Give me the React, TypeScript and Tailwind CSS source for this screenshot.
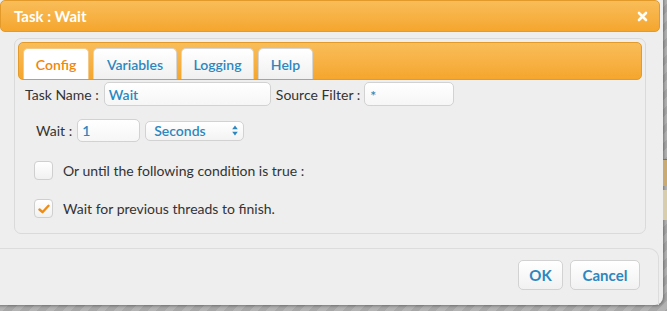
import * as React from "react";

function Checkbox({ checked }: { checked?: boolean }) {
  return (
    <span className="inline-flex h-[19px] w-[19px] items-center justify-center rounded-[4px] border border-[#cfcfcf] bg-gradient-to-b from-white to-[#f1f1f1]">
      {checked && (
        <svg width="12" height="10" viewBox="0 0 12 10">
          <path d="M1.5 5.5 L4.5 8.2 L10.5 1.8" fill="none" stroke="#f08c12" strokeWidth="2.4" strokeLinecap="round" strokeLinejoin="round" />
        </svg>
      )}
    </span>
  );
}

const tabs = [
  { label: "Config", w: "w-[66px]", active: true },
  { label: "Variables", w: "w-[84px]" },
  { label: "Logging", w: "w-[73px]" },
  { label: "Help", w: "w-[55px]" },
];

export default function App() {
  return (
    <div
      className="relative h-[311px] w-[667px] overflow-hidden bg-[#adadad] bg-[repeating-linear-gradient(135deg,#b3b3b3_0px,#b3b3b3_6px,#a6a6a6_6px,#a6a6a6_12px)] text-[14px] text-[#333]"
      style={{ fontFamily: "Lato, 'Open Sans', sans-serif" }}
    >
      {/* strip of page behind, on the right */}
      <div className="absolute right-0 top-[159px] h-[1px] w-[4px] bg-[#b0584a]" />
      <div className="absolute right-0 top-[160px] h-[26px] w-[4px] bg-[#c9aa72]" />
      <div className="absolute right-0 top-[190px] h-[30px] w-[4px] bg-[#d8ceae]" />

      <div className="-ml-[3px] -mt-[3px] flex h-[308px] w-[666px] flex-col rounded-br-[8px] bg-[#eeeeee] shadow-[1px_1px_3px_rgba(0,0,0,0.35)]">
        {/* title bar */}
        <div className="mx-[3px] mt-[3px] flex h-[32px] items-center justify-between rounded-[5px] border border-[#e29a2a] bg-gradient-to-b from-[#f9bd58] to-[#f5a62c] pl-[13px] pr-[11px]">
          <span className="text-[15px] font-bold text-white">Task : Wait</span>
          <svg width="11" height="11" viewBox="0 0 11 11">
            <path d="M2 2 L9 9 M9 2 L2 9" stroke="white" strokeWidth="2.6" strokeLinecap="round" />
          </svg>
        </div>

        {/* content panel */}
        <div className="ml-[17px] mt-[6px] h-[196px] w-[632px] rounded-[7px] border border-[#dadada] bg-[#eeeeee] p-[3px]">
          <div className="flex h-[38px] items-end gap-[4px] rounded-[5px] border border-[#e29a2a] bg-gradient-to-b from-[#f9bd58] to-[#f5a62c] pl-[4px]">
            {tabs.map((t) => (
              <div
                key={t.label}
                className={`flex h-[31px] ${t.w} items-center justify-center rounded-t-[5px] border border-b-0 text-[14px] font-semibold ${
                  t.active
                    ? "border-[#f3c98a] bg-white text-[#f0860c]"
                    : "border-[#d6d6d6] bg-gradient-to-b from-white to-[#f0f0f0] text-[#2d87bf]"
                }`}
              >
                {t.label}
              </div>
            ))}
          </div>

          <div className="mt-[2px] flex items-center pl-[7px]">
            <span>Task Name :</span>
            <div className="ml-[5px] flex h-[24px] w-[167px] items-center rounded-[5px] border border-[#d2d2d2] bg-gradient-to-b from-white to-[#f6f6f6] px-[4px] text-[14px] font-semibold text-[#2d87bf]">
              Wait
            </div>
            <span className="ml-[5px]">Source Filter :</span>
            <div className="ml-[4px] flex h-[24px] w-[90px] items-start rounded-[5px] border border-[#d2d2d2] bg-gradient-to-b from-white to-[#f6f6f6] px-[5px] pt-[2px] text-[14px] font-semibold text-[#2d87bf]">
              *
            </div>
          </div>

          <div className="mt-[13px] flex items-center pl-[18px]">
            <span>Wait :</span>
            <div className="ml-[5px] flex h-[23px] w-[63px] items-center rounded-[5px] border border-[#d2d2d2] bg-gradient-to-b from-white to-[#f6f6f6] px-[4px] text-[14px] font-semibold text-[#2d87bf]">
              1
            </div>
            <div className="ml-[5px] flex h-[20px] w-[99px] items-center justify-between rounded-[5px] border border-[#d2d2d2] bg-gradient-to-b from-white to-[#f3f3f3] pl-[8px] pr-[5px] text-[14px] font-semibold text-[#2d87bf]">
              <span>Seconds</span>
              <svg width="6" height="11" viewBox="0 0 6 11">
                <path d="M3 0.5 L5.8 4.2 L0.2 4.2 Z M3 10.5 L5.8 6.8 L0.2 6.8 Z" fill="#2d87bf" />
              </svg>
            </div>
          </div>

          <div className="mt-[18px] flex items-center gap-[10px] pl-[16px]">
            <Checkbox />
            <span>Or until the following condition is true :</span>
          </div>

          <div className="mt-[17px] flex items-center gap-[10px] pl-[16px]">
            <Checkbox checked />
            <span>Wait for previous threads to finish.</span>
          </div>
        </div>

        {/* footer */}
        <div className="mr-[4px] mt-[14px] flex flex-1 items-start justify-end gap-[7px] rounded-tr-[10px] border-r border-t border-[#dcdcdc] pr-[18px] pt-[11px]">
          <button className="h-[30px] w-[45px] rounded-[5px] border border-[#d2d2d2] bg-gradient-to-b from-white to-[#f1f1f1] text-[15px] font-bold text-[#2d87bf]">
            OK
          </button>
          <button className="h-[30px] w-[70px] rounded-[5px] border border-[#d2d2d2] bg-gradient-to-b from-white to-[#f1f1f1] text-[15px] font-bold text-[#2d87bf]">
            Cancel
          </button>
        </div>
      </div>
    </div>
  );
}
